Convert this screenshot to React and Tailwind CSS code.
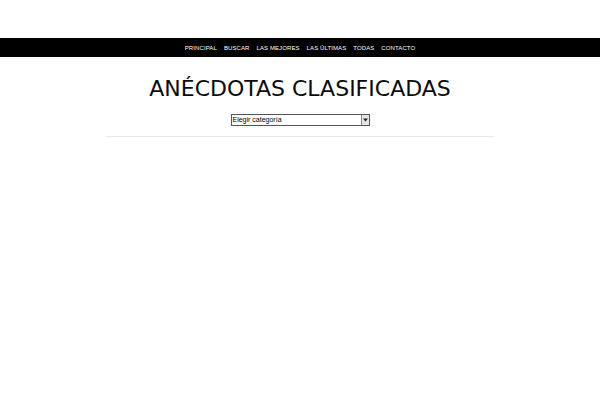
export default function App() {
  const links = ['PRINCIPAL', 'BUSCAR', 'LAS MEJORES', 'LAS ÚLTIMAS', 'TODAS', 'CONTACTO']

  return (
    <div className="w-[600px] h-[400px] bg-white overflow-hidden">
      <div className="h-[38px]" />
      <nav className="h-[19px] bg-black flex justify-center items-center gap-[7px]">
        {links.map(link => (
          <a
            key={link}
            href="#"
            className="text-white text-[6px] tracking-[0.1px] font-['Liberation_Sans',sans-serif] leading-none"
          >
            {link}
          </a>
        ))}
      </nav>

      <div className="w-[388px] mx-auto pt-[19px] border-b border-[#e8e8e8] pb-[10px]">
        <h1 className="text-center text-[22px] leading-[26px] text-[#0a0a0a] font-['DejaVu_Sans',sans-serif]">
          ANÉCDOTAS CLASIFICADAS
        </h1>
        <div className="flex justify-center mt-[12px]">
          <div className="w-[139px] h-[12px] border border-[#555] bg-white flex items-stretch">
            <span className="flex-1 text-[7px] leading-[10px] pl-[1px] text-black font-['Liberation_Sans',sans-serif]">
              Elegir categoría
            </span>
            <span className="w-[8px] border-l border-[#888] bg-[#e6e6e6] flex items-center justify-center">
              <svg width="5" height="4" viewBox="0 0 5 4">
                <path d="M0 0.5h5L2.5 3.5z" fill="#222" />
              </svg>
            </span>
          </div>
        </div>
      </div>
    </div>
  )
}
